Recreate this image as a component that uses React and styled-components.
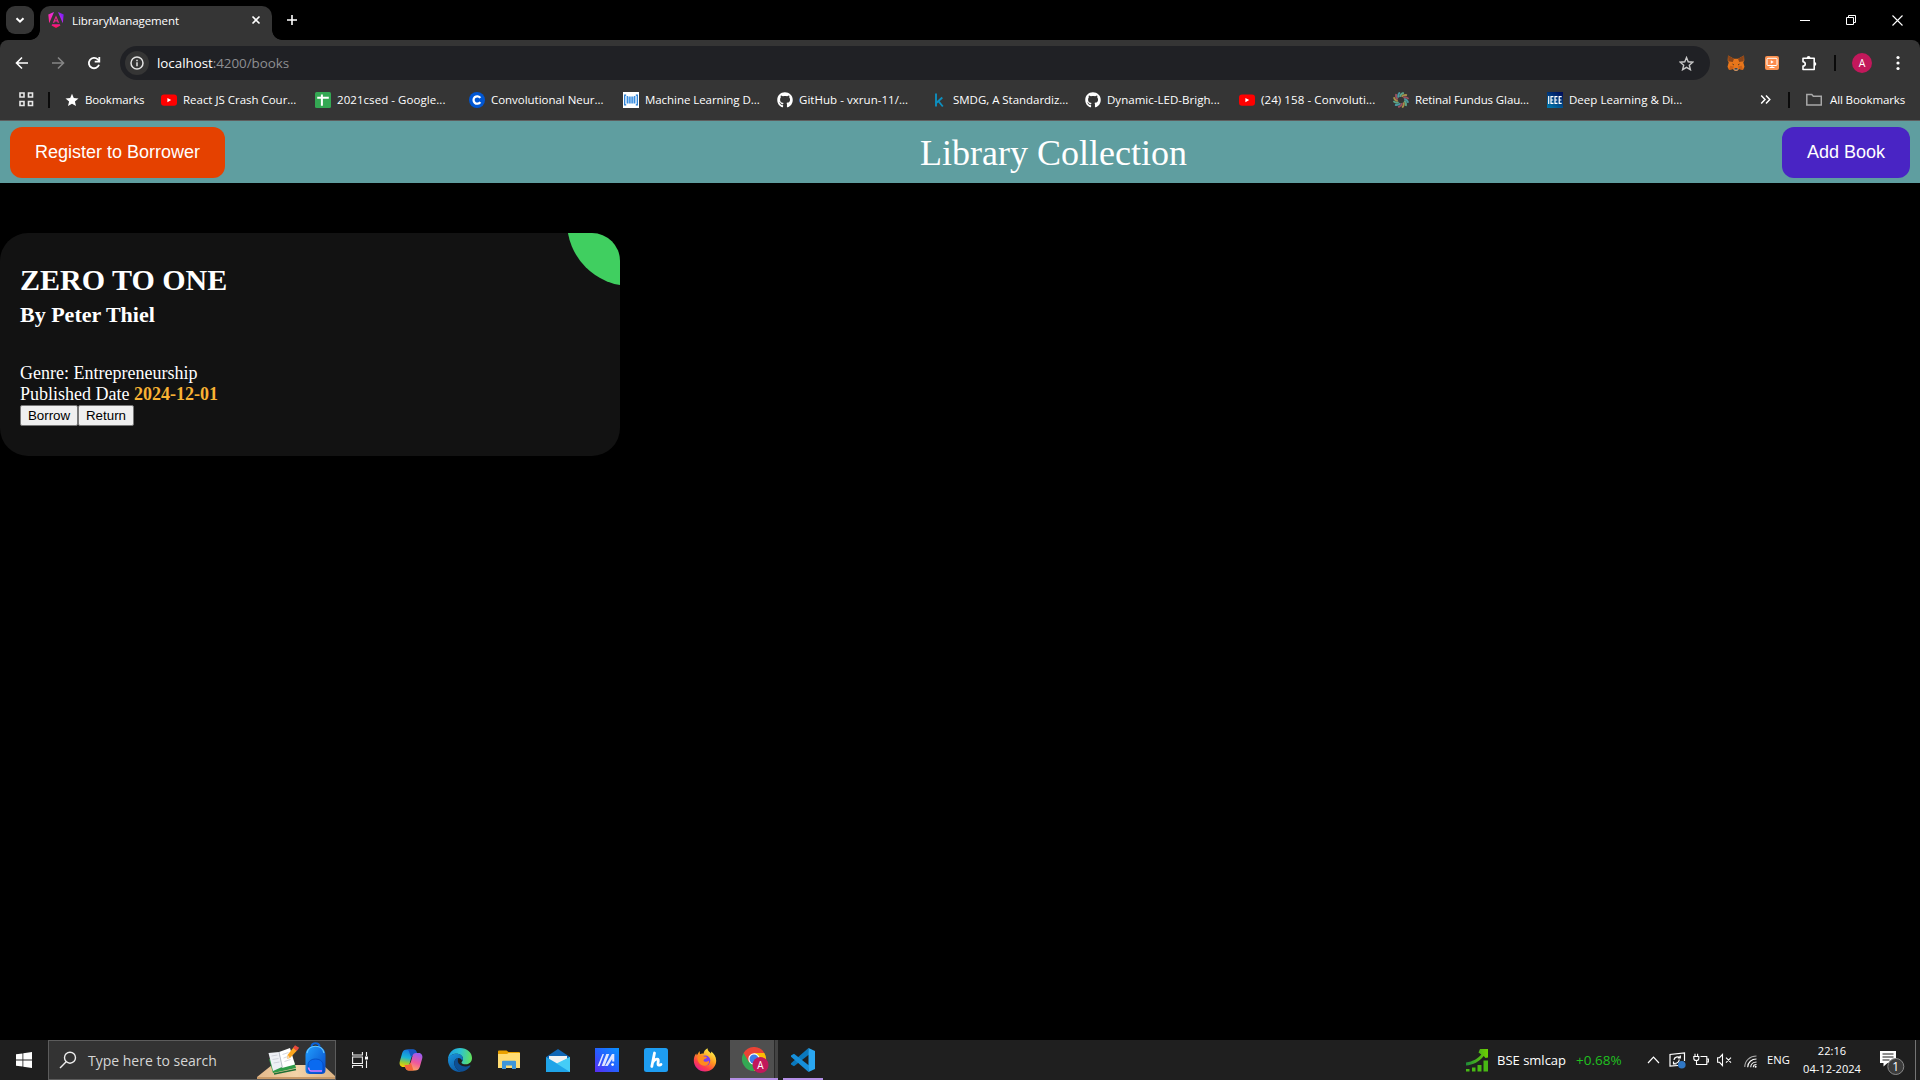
import React from "react";
import styled, { createGlobalStyle, css } from "styled-components";
import { FaGithub } from "react-icons/fa6";

const UI = '"Open Sans", "Noto Sans", sans-serif';

const GlobalStyle = createGlobalStyle`
  * { box-sizing: border-box; }
  html, body { margin: 0; padding: 0; background: #000; }
  body { overflow: hidden; }
  svg { display: block; flex: none; }
`;

const Screen = styled.div`
  width: 1920px;
  height: 1080px;
  display: flex;
  flex-direction: column;
  background: #000;
  color: #fff;
  font-family: ${UI};
`;

/* ---------- browser chrome ---------- */

const TabStrip = styled.div`
  height: 40px;
  flex: none;
  display: flex;
  align-items: flex-start;
  padding-left: 6px;
`;

const TabSearch = styled.div`
  width: 28px;
  height: 28px;
  margin-top: 6px;
  border-radius: 9px;
  background: #353535;
  display: flex;
  align-items: center;
  justify-content: center;
`;

const Tab = styled.div`
  position: relative;
  width: 232px;
  height: 34px;
  margin: 6px 0 0 6px;
  padding: 0 9px 6px 8px;
  border-radius: 10px 10px 0 0;
  background: #353535;
  display: flex;
  align-items: center;
  &::before, &::after {
    content: "";
    position: absolute;
    bottom: 0;
    width: 10px;
    height: 10px;
  }
  &::before {
    left: -10px;
    background: radial-gradient(circle at 0 0, transparent 9.5px, #353535 10.2px);
  }
  &::after {
    right: -10px;
    background: radial-gradient(circle at 100% 0, transparent 9.5px, #353535 10.2px);
  }
`;

const TabTitle = styled.span`
  flex: 1;
  margin-left: 8px;
  padding-top: 2px;
  font-size: 11.5px;
  line-height: 16px;
  letter-spacing: -0.1px;
  white-space: nowrap;
`;

const NewTab = styled.div`
  width: 40px;
  height: 40px;
  display: flex;
  align-items: center;
  justify-content: center;
`;

const WindowControls = styled.div`
  display: flex;
  margin-left: auto;
`;

const WindowButton = styled.div`
  width: 46px;
  height: 40px;
  display: flex;
  align-items: center;
  justify-content: center;
`;

const Toolbar = styled.div`
  height: 43px;
  flex: none;
  padding: 3px 0 0 4px;
  border-radius: 8px 8px 0 0;
  background: #353535;
  display: flex;
  align-items: center;
`;

const NavButton = styled.div`
  width: 36px;
  height: 34px;
  display: flex;
  align-items: center;
  justify-content: center;
`;

const Omnibox = styled.div`
  width: 1590px;
  height: 34px;
  margin-left: 8px;
  padding: 0 16px 0 5px;
  border-radius: 17px;
  background: #202125;
  display: flex;
  align-items: center;
`;

const SiteInfo = styled.div`
  width: 24px;
  height: 24px;
  border-radius: 50%;
  background: #353535;
  display: flex;
  align-items: center;
  justify-content: center;
`;

const Url = styled.span`
  flex: 1;
  margin-left: 8px;
  color: #8e8f92;
  font-size: 13.4px;
  line-height: 20px;
  letter-spacing: -0.04px;
  b { color: #fff; font-weight: 400; }
`;

const Extensions = styled.div`
  display: flex;
  align-items: center;
  padding-left: 8px;
  flex: 1;
`;

const Divider = styled.i`
  flex: none;
  width: 2px;
  height: 16px;
  background: #0a0a0a;
`;

const Avatar = styled.div`
  width: 20px;
  height: 20px;
  margin-left: 16px;
  border-radius: 50%;
  background: #c2185b;
  font-size: 10.5px;
  line-height: 20px;
  text-align: center;
`;

const BookmarkBar = styled.div`
  height: 38px;
  flex: none;
  padding: 0 15px 4px 19px;
  border-bottom: 1px solid #5e5e5e;
  background: #353535;
  display: flex;
  align-items: center;
`;

const Bookmark = styled.div`
  width: ${(p) => p.$width || 154}px;
  flex: none;
  display: flex;
  align-items: center;
  gap: 6px;
`;

const BookmarkText = styled.span`
  font-size: 11.5px;
  line-height: 16px;
  letter-spacing: ${(p) => p.$track || 0}px;
  white-space: nowrap;
`;

const BarEnd = styled.div`
  display: flex;
  align-items: center;
  margin-left: auto;
`;

/* ---------- page ---------- */

const Page = styled.main`
  flex: 1;
  font-family: "Liberation Serif", "Times New Roman", serif;
`;

const Header = styled.header`
  height: 62px;
  padding: 0 10px;
  background: #5f9ea0;
  display: flex;
  align-items: center;
`;

const Title = styled.div`
  flex: 1;
  padding: 3px 0 0 100px;
  font-size: 36px;
  line-height: 41px;
  text-align: center;
`;

const HeaderButton = styled.button`
  height: 51px;
  width: ${(p) => p.$width}px;
  padding: 1px 0 0;
  border: 0;
  border-radius: 12px;
  background: ${(p) => p.$color};
  color: #fff;
  font: 18px "Liberation Sans", Arial, sans-serif;
`;

const Card = styled.article`
  position: relative;
  overflow: hidden;
  width: 620px;
  height: 223px;
  margin-top: 50px;
  padding: 30px 20px;
  border-radius: 28px;
  background: #121212;
`;

const Corner = styled.div`
  position: absolute;
  top: -75px;
  right: -75px;
  width: 128px;
  height: 128px;
  border-radius: 50%;
  background: #40cf60;
`;

const BookTitle = styled.h1`
  margin: 0;
  font-size: 30px;
  line-height: 34px;
`;

const Author = styled.h2`
  margin: 5px 0 36px;
  font-size: 22px;
  line-height: 25px;
`;

const Detail = styled.div`
  font-size: 18px;
  line-height: 21px;
  b { color: #f9b234; }
`;

const Actions = styled.div`
  display: flex;
`;

const ActionButton = styled.button`
  height: 21px;
  width: ${(p) => p.$width}px;
  padding: 0;
  border: 1px solid #767676;
  border-radius: 2px;
  background: #efefef;
  color: #000;
  font: 13.333px/19px "Liberation Sans", Arial, sans-serif;
`;

/* ---------- taskbar ---------- */

const Taskbar = styled.footer`
  height: 40px;
  flex: none;
  background: #1f1f1f;
  display: flex;
  align-items: stretch;
`;

const StartButton = styled.div`
  width: 48px;
  display: flex;
  align-items: center;
  justify-content: center;
`;

const SearchBox = styled.div`
  width: 288px;
  border: 1px solid #5c5c5c;
  background: #333;
  display: flex;
  align-items: center;
  padding-left: 10px;
  overflow: hidden;
`;

const SearchText = styled.span`
  flex: 1;
  margin-left: 11px;
  padding-top: 1px;
  color: #d6d6d6;
  font-size: 14px;
  line-height: 20px;
  white-space: nowrap;
`;

const TaskButton = styled.div`
  width: ${(p) => p.$width || 49}px;
  height: 40px;
  display: flex;
  align-items: center;
  justify-content: center;
  ${(p) => p.$running && css`border-bottom: 2px solid #b48fe6; svg { margin-top: 2px; }`}
  ${(p) => p.$active && css`
    background: linear-gradient(90deg, #4f4f4f 0 44px, #292929 44px 45px, #434343 45px);
    padding-left: 4px;
  `}
`;

const Apps = styled.div`
  display: flex;
  margin-left: 2px;
`;

const Tray = styled.div`
  display: flex;
  align-items: center;
  margin-left: auto;
`;

const TrayText = styled.span`
  font-size: ${(p) => p.$size}px;
  margin-left: ${(p) => p.$gap}px;
  width: ${(p) => p.$width}px;
  color: ${(p) => p.$color || "#fff"};
  line-height: 18px;
  white-space: nowrap;
`;

const TrayIcon = styled.span`
  margin-left: ${(p) => p.$gap}px;
  padding-top: ${(p) => p.$drop || 0}px;
`;

const Clock = styled.div`
  width: 60px;
  margin-left: 12px;
  font-size: 11.1px;
  line-height: 18px;
  text-align: center;
  white-space: nowrap;
`;

const ShowDesktop = styled.div`
  width: 5px;
  height: 40px;
  margin-left: 10px;
  border-left: 1px solid #747474;
`;

/* ---------- icons ---------- */

const Line = ({ w, h = w, d, c = "#e3e3e3", sw = 1.6 }) => (
  <svg width={w} height={h} viewBox={`0 0 ${w} ${h}`} fill="none" stroke={c} strokeWidth={sw}>
    <path d={d} />
  </svg>
);

const AngularIcon = () => (
  <svg width="16" height="16" viewBox="0 0 16 16">
    <defs>
      <linearGradient id="ng" x1="0" y1="0.6" x2="1" y2="0.2">
        <stop offset="0" stopColor="#ff2a9a" />
        <stop offset="0.5" stopColor="#e52cf0" />
        <stop offset="1" stopColor="#6b1cf5" />
      </linearGradient>
      <linearGradient id="ngb" x1="0" y1="0" x2="0" y2="1">
        <stop offset="0" stopColor="#f0189c" />
        <stop offset="1" stopColor="#ff1744" />
      </linearGradient>
    </defs>
    <path d="M6 0 0.3 2.4 1.2 11.2ZM10 0l5.700 2.400-.9 8.800Z" fill="url(#ng)" />
    <path d="m8 3.600 3.200 7.200H9.700L9.200 9.500H6.800l-.5 1.300H4.800ZM8 6l-.8 2.200h1.600Z" fill="#e8278f" />
    <path d="M4.200 12.200h7.600l.6 1.400L8 16l-4.400-2.400Z" fill="url(#ngb)" />
  </svg>
);

const InfoIcon = () => (
  <svg width="14" height="14" viewBox="0 0 14 14" fill="none" stroke="#e3e3e3" strokeWidth="1.5">
    <circle cx="7" cy="7" r="6" />
    <path d="M7 6.300v4M7 3.700v1.500" />
  </svg>
);

const ReloadIcon = () => (
  <svg width="14" height="14" viewBox="0 0 14 14" fill="none" stroke="#fff" strokeWidth="1.800">
    <path d="M12 8.700A5.200 5.200 0 1 1 10.800 3.400L12.300 5" />
    <path d="M12.300 1v4.700H7.700" />
  </svg>
);

const FoxIcon = () => (
  <svg width="18" height="18" viewBox="0 0 18 18">
    <path d="M1 1.500 7 4.800h4l6-3.300.3 5-1 2 1.200 4.200-1.500 3.300-3.700-1-2 1.800H7.700l-2-1.800-3.700 1L.5 12.700l1.200-4.200-1-2Z" fill="#e8761b" />
    <path d="M1 1.500 7 4.800 5.800 8 1.300 7.200ZM17 1.500l-6 3.300L12.200 8l4.500-.8Z" fill="#8a4519" />
    <path d="M2 16l3.700-1L7 12.500 3.200 11.800ZM16 16l-3.700-1L11 12.500l3.800-.7Z" fill="#cd6116" />
    <path d="M4.800 9.500 7 10.200l-.3 1.300ZM13.200 9.500l-2.200.7.3 1.300Z" fill="#5a3c22" />
    <path d="M7 14.200h4v1.500l-.8.800H7.800l-.8-.8Z" fill="#c9b9aa" />
    <path d="M7.500 14.200h3l.2 1.200H7.300Z" fill="#24211f" />
  </svg>
);

const RecorderIcon = () => (
  <svg width="14" height="14" viewBox="0 0 14 14">
    <rect width="14" height="14" rx="2" fill="#fb9150" />
    <rect x="2" y="2.300" width="10" height="7.200" rx="1" fill="#fb8a4b" stroke="#fff" strokeWidth="1" />
    <path d="M5.800 4.200v3.600L8.800 6ZM6.500 9.500h1v1.500h2v.9h-5V11h2Z" fill="#fff" />
  </svg>
);

const PuzzleIcon = () => (
  <svg width="17" height="17" viewBox="0 0 17 17">
    <path d="M2 3.200h11.200v11.300H2v-3.400c3-.3 3-4.100 0-4.400Z" fill="none" stroke="#fff" strokeWidth="1.600" strokeLinejoin="round" />
    <path d="M5.700 3a1.900 1.900 0 0 1 3.800 0ZM13.400 7a1.900 1.900 0 0 1 0 3.800Z" fill="#fff" />
  </svg>
);

const AppsGrid = () => (
  <svg width="15" height="15" viewBox="0 0 15 15" fill="none" stroke="#e8e8e8" strokeWidth="1.600">
    <path d="M1 1h4v4H1ZM9.500 1h4v4h-4ZM1 9.500h4v4H1ZM9.500 9.500h4v4h-4Z" />
  </svg>
);

const StarFill = () => (
  <svg width="14" height="14" viewBox="0 0 14 14">
    <path d="m7 .8 1.800 4.300 4.700.4-3.600 3 1.100 4.600L7 10.700l-4 2.400 1.100-4.600-3.600-3 4.700-.4Z" fill="#fff" />
  </svg>
);

const YouTube = () => (
  <svg width="16" height="16" viewBox="0 0 16 16">
    <rect y="2.400" width="16" height="11.400" rx="3" fill="#f00" />
    <path d="M6.400 6v4.300L10.200 8.100Z" fill="#fff" />
  </svg>
);

const Sheets = () => (
  <svg width="16" height="16" viewBox="0 0 16 16">
    <rect width="16" height="16" rx="1.500" fill="#34a853" />
    <path d="M2.200 4.800h11.600v2H7.900V13.800h-2V6.800H2.200ZM5.900 2.500h2v3h-2Z" fill="#fff" />
  </svg>
);

const Coursera = () => (
  <svg width="16" height="16" viewBox="0 0 16 16">
    <circle cx="8" cy="8" r="8" fill="#0056d2" />
    <path d="M11.300 5.900A3.700 3.700 0 1 0 11.300 10.100" fill="none" stroke="#fff" strokeWidth="2.300" />
  </svg>
);

const Repo = () => (
  <svg width="16" height="16" viewBox="0 0 16 16">
    <rect width="16" height="16" fill="#fff" />
    <path d="M3.200 3.200H1.700v9.600h1.500M12.800 3.200h1.500v9.600h-1.500" fill="none" stroke="#1976d2" strokeWidth="1.200" />
    <path d="M4.300 4v7.500M6.200 4.500v7M8 4.500v7M9.800 4.500v7M11.700 4v7.500" stroke="#3b8ee0" strokeWidth="1.400" />
  </svg>
);

const KaggleMark = () => (
  <svg width="16" height="16" viewBox="0 0 16 16" fill="none" stroke="#0e8fbf" strokeWidth="1.900">
    <path d="M5 1.500v13M11.300 5.500 5.500 10.800M7.300 9 11.800 14.500" />
  </svg>
);

const Swirl = () => (
  <svg width="16" height="16" viewBox="0 0 16 16" fill="none" strokeWidth="1.900">
    {Array.from({ length: 12 }, (_, i) => (
      <path key={i} d="M7 4.800Q7.300 2 10.800.8" transform={`rotate(${i * 30} 8 8)`} stroke={["#5ba588", "#a6904a", "#98505f", "#4a98a2"][i % 4]} />
    ))}
  </svg>
);

const Ieee = () => (
  <svg width="16" height="16" viewBox="0 0 16 16">
    <defs>
      <linearGradient id="ie" x1="0.2" y1="1" x2="0.8" y2="0">
        <stop offset="0" stopColor="#0274a8" />
        <stop offset="1" stopColor="#00105c" />
      </linearGradient>
    </defs>
    <rect width="16" height="16" fill="url(#ie)" />
    <path d="M1.700 4v8M6.500 4.600H4v6.800h2.500M4 8h2.200M10.500 4.600H8v6.800h2.500M8 8h2.200M14.700 4.600h-2.500v6.800h2.500M12.200 8h2.200" fill="none" stroke="#fff" strokeWidth="1.200" />
  </svg>
);

const WindowsLogo = () => (
  <svg width="16" height="16" viewBox="0 0 16 16" fill="#fff">
    <path d="M0 2.300 6.500 1.400V7.600H0ZM7.300 1.300 16 0v7.600H7.300ZM0 8.400h6.500v6.200L0 13.700ZM7.300 8.400H16V16l-8.700-1.300Z" />
  </svg>
);

const SchoolArt = () => (
  <svg width="78" height="38" viewBox="0 0 78 38">
    <defs>
      <linearGradient id="bag" x1="0" y1="0" x2="1" y2="1">
        <stop offset="0" stopColor="#22a0ff" />
        <stop offset="1" stopColor="#0648c8" />
      </linearGradient>
      <linearGradient id="desk" x1="0" y1="0" x2="1" y2="0">
        <stop offset="0" stopColor="#e3b98c" />
        <stop offset="0.5" stopColor="#f3d3a8" />
        <stop offset="1" stopColor="#dcb384" />
      </linearGradient>
    </defs>
    <path d="M15 24h51l13 12H0Z" fill="url(#desk)" />
    <path d="M0 36h79v3H0Z" fill="#c99a68" />
    <path d="M12 18 16 32 39 27 37 20Z" fill="#2f9b48" />
    <path d="M17 33 39 28.500" stroke="#1c6d33" strokeWidth="1.500" />
    <path d="M11.500 12 22 11 25 26 16 30Z" fill="#eef0f5" />
    <path d="M22 11 33 7 38 23.500 25 27Z" fill="#fff" />
    <path d="M22 11 25.500 27" stroke="#bcc0ca" />
    <path d="m14.500 15 6-1M15.500 18.500l6-1M16.500 22l6-1M25.500 13.500l6-2M26.500 17l6-2M27.500 20.500l6-2" stroke="#c3c6d0" strokeWidth=".7" />
    <path d="M36.500 6.500 40 9.500 33 17l-3 .8.700-4Z" fill="#fca61f" />
    <path d="m36 7 2-2.800 4.200 2.600L39.800 10Z" fill="#e84a3c" />
    <path d="m30.800 14 2 2.600-3 1.300Z" fill="#f5dab6" />
    <path d="M54.500 6c0-5 8-5 8 0" fill="none" stroke="#0b63d8" strokeWidth="2.200" />
    <path d="M48.500 14c0-12 20-12 20 0v15c0 3-2 4-4 4h-12c-2 0-4-1-4-4Z" fill="url(#bag)" />
    <path d="M50 12c2-9 15-9 17 0" fill="none" stroke="#63c6ff" strokeWidth="1.200" />
    <path d="M51 24c0-8 15-8 15 0v6c0 1-1 2-2 2H53c-1 0-2-1-2-2Z" fill="#0a6af0" stroke="#0544b5" strokeWidth=".7" />
    <path d="M51.500 26.500q.5 3.500 3 3.500H65" fill="none" stroke="#d77bff" strokeWidth="1.500" />
  </svg>
);

const TaskView = () => (
  <svg width="16" height="16" viewBox="0 0 16 16" fill="none" stroke="#f2f2f2" strokeWidth="1.100">
    <path d="M.6 0v3h9.800V0M.6 5h9.800v6.500H.6ZM.6 16v-2.500h9.800V16M14.500 0v4M14.500 8.500V16" />
    <path d="M13 4.500h3v3h-3Z" fill="#fff" stroke="none" />
  </svg>
);

const Copilot = () => (
  <svg width="24" height="24" viewBox="0 0 24 24">
    <defs>
      <linearGradient id="cp1" x1="0.4" y1="0" x2="0.2" y2="1">
        <stop offset="0" stopColor="#1677dd" />
        <stop offset="0.45" stopColor="#19b5d8" />
        <stop offset="0.75" stopColor="#9bcb35" />
        <stop offset="1" stopColor="#ffd000" />
      </linearGradient>
      <linearGradient id="cp2" x1="0.7" y1="0" x2="0.3" y2="1">
        <stop offset="0" stopColor="#9b5cf0" />
        <stop offset="0.5" stopColor="#f0589c" />
        <stop offset="1" stopColor="#ffb657" />
      </linearGradient>
    </defs>
    <path d="M14 1.500c2.500 0 3.200 1.500 3.800 3.500l.7 2h-3c-2 0-2.800 1-3.500 3.500l-1.500 5.500c-.6 2-1.500 3-3.500 3H4.200C1.500 19 0 16.500.8 13.500L3.200 5C4 2.500 5.500 1.500 8 1.500Z" fill="url(#cp1)" />
    <path d="M14 1.500c2.500 0 3.200 1.500 3.800 3.500l.7 2h-3c-2 0-2.800.8-3.300 2.500L10.500 5c-.6-2-1-3.500-3-3.500Z" fill="#1756c4" />
    <path d="M10 22.500c-2.500 0-3.200-1.500-3.800-3.500l-.7-2h3c2 0 2.800-1 3.500-3.500L13.500 8c.6-2 1.500-3 3.500-3h2.800c2.700 0 4.200 2.500 3.400 5.500L20.800 19c-.8 2.500-2.300 3.500-4.800 3.500Z" fill="url(#cp2)" />
    <path d="M10 22.500c-2.500 0-3.200-1.500-3.800-3.500l-.7-2h3c2 0 2.800-.8 3.300-2.500l1.700 5c.6 1.500.5 3 2 3Z" fill="#f4643c" />
  </svg>
);

const Edge = () => (
  <svg width="24" height="24" viewBox="0 0 24 24">
    <defs>
      <linearGradient id="e1" x1="0" y1="0.4" x2="1" y2="0.5">
        <stop offset="0" stopColor="#1b9de2" />
        <stop offset="0.5" stopColor="#2dc3d0" />
        <stop offset="1" stopColor="#62e25c" />
      </linearGradient>
      <linearGradient id="e2" x1="0" y1="0" x2="0.6" y2="1">
        <stop offset="0" stopColor="#1a96df" />
        <stop offset="1" stopColor="#0c59a4" />
      </linearGradient>
    </defs>
    <path d="M0 12C0 4.500 5.500 0 12 0c7 0 12 4.500 12 10 0 4-3 6.300-6.300 6.300-2.700 0-4.200-.9-4.200-1.800 0-.6 1.500-1.300 1.500-3.500C15 8 12 5.800 8.500 5.800 4 5.800 1 8.500 0 12Z" fill="url(#e1)" />
    <path d="M0 12c.5-3.800 4-6.200 8.500-6.200 3.500 0 6.500 2 6.500 5 0 .9-.4 1.800-.8 2.300-.5-2-2-3-3.700-3C8 10.100 6.300 12.500 6.300 15c0 4.500 4 8.600 8.500 8.600-1 .3-1.800.4-2.800.4C5 24 0 18.500 0 12Z" fill="url(#e2)" />
    <path d="M10.300 10.100C8 10.100 6.300 12.500 6.300 15c0 4.500 4 8.600 8.500 8.600 3-.8 5.800-2.700 7.500-5.300.4-.6-.2-1-.8-.7-1.200.6-2.800.9-4 .9-4.200 0-7.700-2.500-7.700-5.700 0-1 .3-2 .5-2.700Z" fill="#0d4f94" />
  </svg>
);

const Explorer = () => (
  <svg width="22" height="20" viewBox="0 0 22 20">
    <path d="M0 1.500q0-1 1-1h7.500L10.500 2H21q1 0 1 1v13H0Z" fill="#e9a100" />
    <path d="M0 4h9l1.500-1H22v15H0Z" fill="#ffdc73" />
    <path d="M4 19v-7.200q0-1 1-1h12q1 0 1 1V19h-4v-3.500H8V19Z" fill="#3f96d8" />
  </svg>
);

const Mail = () => (
  <svg width="24" height="23" viewBox="0 0 24 23">
    <path d="M0 8 12 0l12 8v3H0Z" fill="#1066b5" />
    <path d="M3 7h18v8H3Z" fill="#f2f2f2" />
    <path d="M0 8l12 7L24 8v15H0Z" fill="#1fa4e8" />
    <path d="M24 8v15L10.500 14.500Z" fill="#45cdf7" />
  </svg>
);

const MyAsus = () => (
  <svg width="24" height="24" viewBox="0 0 24 24">
    <defs>
      <linearGradient id="ma" x1="0" y1="1" x2="1" y2="0">
        <stop offset="0" stopColor="#5a2bf0" />
        <stop offset="0.5" stopColor="#2461ff" />
        <stop offset="1" stopColor="#0a93ff" />
      </linearGradient>
    </defs>
    <rect width="24" height="24" fill="url(#ma)" />
    <path d="M7.500 6H9L4.500 18H2.700ZM11.300 6h2.900L9.500 18H6.600ZM17 6h2.300v7.500h-2.100V11l-4.500 7H10Z" fill="#dfe5ff" />
    <circle cx="17.600" cy="16.600" r="1.400" fill="#fff" />
  </svg>
);

const Hicon = () => (
  <svg width="24" height="24" viewBox="0 0 24 24">
    <rect width="24" height="24" rx="2.500" fill="#1e9df1" />
    <path d="M10.500 5 7.800 18.500M8.600 14.500c1.500-3 6.200-5.200 5.700-1.500-.4 3-1.300 5.500 2.700 3.500" fill="none" stroke="#fff" strokeWidth="2.800" strokeLinecap="round" />
  </svg>
);

const Firefox = () => (
  <svg width="24" height="24" viewBox="0 0 24 24">
    <defs>
      <linearGradient id="ff" x1="0.8" y1="0.1" x2="0.25" y2="0.95">
        <stop offset="0" stopColor="#fff04a" />
        <stop offset="0.4" stopColor="#ff9a1f" />
        <stop offset="0.75" stopColor="#ff3f48" />
        <stop offset="1" stopColor="#e5208d" />
      </linearGradient>
    </defs>
    <path d="M12 23.500C5.700 23.500.8 18.700.8 12.500c0-3 1-5.500 2.500-7l.5 2L6.500 3l.5 3.200c1-.6 2.500-.7 3.500-.5C11 3 12.500 1.300 14.500.3c0 2.500 2 3.500 3.500 5.200l.3-2c2.500 2 4.900 5 4.900 9.300 0 6.200-5 10.700-11.200 10.700Z" fill="url(#ff)" />
    <circle cx="12.300" cy="12.600" r="5" fill="#7b3ff0" />
    <path d="M4.500 9c2-2.500 5.500-2 6.500-.5 1.500 0 2.500.3 3 .7-.5 1.500-3 1.500-3.500 3 .5 2 3.500 2 5.500.5.5 3-2 5-4.700 5C7.500 17.700 4 14 4.500 9Z" fill="#ff8a1e" />
  </svg>
);

const Chrome = () => (
  <svg width="28" height="26" viewBox="0 0 28 26">
    <path d="M12 12V6h10.400A12 12 0 0 1 12 24Z" fill="#fbbc05" />
    <path d="M12 12 17.200 15 12 24A12 12 0 0 1 1.600 6Z" fill="#34a853" />
    <path d="M1.600 6A12 12 0 0 1 22.400 6H12Z" fill="#ea4335" />
    <path d="M1.600 6 6.800 15 12 6Z" fill="#ea4335" />
    <circle cx="12" cy="12" r="5.700" fill="#fff" />
    <circle cx="12" cy="12" r="4.500" fill="#3d7de8" />
    <circle cx="18.500" cy="18" r="8" fill="#c2185b" />
    <text x="18.500" y="21.700" textAnchor="middle" fill="#fff" fontSize="10" fontFamily="Open Sans, sans-serif">A</text>
  </svg>
);

const VsCode = () => (
  <svg width="24" height="24" viewBox="0 0 24 24">
    <path d="M17.500 0 18 6.500 3 18.300 0 16.500v-1.200Z" fill="#0a78bd" />
    <path d="M17.500 24 18 17.500 3 5.700 0 7.500v1.200Z" fill="#168fda" />
    <path d="M17.500 0 24 3v18l-6.500 3Z" fill="#2aa7f2" />
  </svg>
);

const StockIcon = () => (
  <svg width="22" height="23" viewBox="0 0 22 23">
    <defs>
      <linearGradient id="stk" x1="0" y1="0" x2="1" y2="0">
        <stop offset="0" stopColor="#1f8a3a" />
        <stop offset="1" stopColor="#6ed000" />
      </linearGradient>
    </defs>
    <path d="M0 13.500C7 12.500 12 9.500 15.300 5.500L12.500 3.500 14 0h8v8.500l-2.500.5-1.800-2C13.500 12.500 7 16 0 16.500Z" fill="url(#stk)" />
    <path d="M0 20h3.500v2.500H0ZM6 18.500h3.500v4H6ZM11.500 16h4v6.500h-4ZM17.500 11.500H22v11h-4.500Z" fill="#48b814" />
  </svg>
);

const LocationSync = () => (
  <svg width="17" height="17" viewBox="0 0 17 17" fill="none" stroke="#fff" strokeWidth="1.200">
    <path d="M9 13.500 1 14V2.500L15.500 1v8" />
    <path d="M4.500 9.500V12h3M4.800 11.500C9 11.500 10.500 9 10 7.500M5 8c0-3 4-4 6-2.500M8.800 5.800h2.500V3.500" />
    <circle cx="12.800" cy="12.800" r="3.800" fill="#2f77c5" stroke="none" />
  </svg>
);

const Battery = () => (
  <svg width="16" height="14" viewBox="0 0 16 14" fill="none" stroke="#fff" strokeWidth="1.100">
    <path d="M7.500 3.500h6.300v8H3.500V8M13.800 6h1.600v3h-1.600M.8 3.500h5v2q0 2-2.500 2T.8 5.500ZM2 3.500V.8M4.600 3.500V.8" />
  </svg>
);

const Muted = () => (
  <svg width="15" height="14" viewBox="0 0 15 14" fill="none" stroke="#fff" strokeWidth="1.100">
    <path d="M.6 4.700h1.900l3-3.200v11l-3-3.200H.6ZM9 4.700l5 5M14 4.700l-5 5" />
  </svg>
);

const Wifi = () => (
  <svg width="13" height="13" viewBox="0 0 13 13" fill="none" stroke="#fff" strokeWidth="1.100">
    <path d="M.8 12C.8 5.500 6 1 12.500 1" stroke="#a9a9a9" />
    <path d="M3.700 12.300c0-5 4-8.300 8.800-8.300M6.700 12.300c0-3.300 2.600-5.300 5.800-5.300M9.300 12.300c0-1.800 1.400-2.800 3.200-2.800" />
    <circle cx="11.600" cy="11.800" r="1" fill="#fff" stroke="none" />
  </svg>
);

const Notifications = () => (
  <svg width="25" height="26" viewBox="0 0 25 26">
    <path d="M0 1h16v12H7.500L3.500 16.500V13H0Z" fill="#fff" />
    <path d="M2.500 4h11M2.500 7h11M2.500 10h7" stroke="#1f1f1f" strokeWidth="1.100" />
    <circle cx="15.800" cy="16.500" r="8" fill="#3b3b3b" stroke="#8a8a8a" />
    <text x="15.800" y="20.600" textAnchor="middle" fill="#fff" fontSize="12" fontFamily="Open Sans, sans-serif">1</text>
  </svg>
);

const bookmarks = [
  { icon: <YouTube />, text: "React JS Crash Cour...", track: -0.02 },
  { icon: <Sheets />, text: "2021csed - Google...", track: 0.06 },
  { icon: <Coursera />, text: "Convolutional Neur...", track: -0.03 },
  { icon: <Repo />, text: "Machine Learning D...", track: -0.06 },
  { icon: <FaGithub size={16} />, text: "GitHub - vxrun-11/...", track: 0.04 },
  { icon: <KaggleMark />, text: "SMDG, A Standardiz...", track: -0.03 },
  { icon: <FaGithub size={16} />, text: "Dynamic-LED-Brigh...", track: 0.03 },
  { icon: <YouTube />, text: "(24) 158 - Convoluti...", track: 0.09 },
  { icon: <Swirl />, text: "Retinal Fundus Glau...", track: -0.11 },
  { icon: <Ieee />, text: "Deep Learning & Di...", track: 0.03 },
];

const GapLeft = styled.span`
  margin-left: ${(p) => p.$gap}px;
  display: flex;
`;

function Browser() {
  return (
    <>
      <TabStrip>
        <TabSearch><Line w={10} d="M1.500 3.200 5 6.700 8.500 3.200" c="#fff" sw={2} /></TabSearch>
        <Tab>
          <AngularIcon />
          <TabTitle>LibraryManagement</TabTitle>
          <Line w={14} d="M3.500 3.500l7 7M10.500 3.500l-7 7" c="#fff" sw={1.600} />
        </Tab>
        <NewTab><Line w={12} d="M6 1v10M1 6h10" c="#fff" sw={1.600} /></NewTab>
        <WindowControls>
          <WindowButton><Line w={10} d="M0 5.500h10" c="#fff" sw={1} /></WindowButton>
          <WindowButton><Line w={10} d="M.5 2.500h7v7h-7ZM2.500 2.500v-2h7v7h-2" c="#fff" sw={1} /></WindowButton>
          <WindowButton><Line w={11} d="M.5.5l10 10M10.500.5l-10 10" c="#fff" sw={1.100} /></WindowButton>
        </WindowControls>
      </TabStrip>
      <Toolbar>
        <NavButton><Line w={14} d="M13 7H2M7 1.500 1.500 7 7 12.500" c="#fff" sw={1.600} /></NavButton>
        <NavButton><Line w={14} d="M1 7h11M7 1.500 12.500 7 7 12.500" c="#858585" sw={1.600} /></NavButton>
        <NavButton><ReloadIcon /></NavButton>
        <Omnibox>
          <SiteInfo><InfoIcon /></SiteInfo>
          <Url><b>localhost</b>:4200/books</Url>
          <Line w={15} d="m7.500 1.600 1.700 4.200 4.600.4-3.500 3 1.100 4.500-3.900-2.400-3.900 2.400 1.100-4.500-3.500-3 4.600-.4Z" c="#c9c9c9" sw={1.400} />
        </Omnibox>
        <Extensions>
          <GapLeft $gap={9}><FoxIcon /></GapLeft>
          <GapLeft $gap={20}><RecorderIcon /></GapLeft>
          <GapLeft $gap={22}><PuzzleIcon /></GapLeft>
          <GapLeft $gap={16}><Divider /></GapLeft>
          <Avatar>A</Avatar>
          <GapLeft $gap={24}>
            <svg width="4" height="16" viewBox="0 0 4 16" fill="#fff"><circle cx="2" cy="2.500" r="1.600" /><circle cx="2" cy="8" r="1.600" /><circle cx="2" cy="13.500" r="1.600" /></svg>
          </GapLeft>
        </Extensions>
      </Toolbar>
      <BookmarkBar>
        <AppsGrid />
        <GapLeft $gap={14}><Divider /></GapLeft>
        <GapLeft $gap={15}>
          <Bookmark $width={96}><StarFill /><BookmarkText $track={-0.13}>Bookmarks</BookmarkText></Bookmark>
        </GapLeft>
        {bookmarks.map((b) => (
          <Bookmark key={b.text}>{b.icon}<BookmarkText $track={b.track}>{b.text}</BookmarkText></Bookmark>
        ))}
        <BarEnd>
          <Line w={11} d="M1.200 1.500 5 5.500 1.200 9.500M6 1.500 9.800 5.500 6 9.500" c="#fff" sw={1.500} />
          <GapLeft $gap={17}><Divider /></GapLeft>
          <GapLeft $gap={16}><Line w={16} h={13} d="M.8 1.500h5l1.500 1.700h8V12H.8Z" c="#a8a8a8" sw={1.500} /></GapLeft>
          <GapLeft $gap={8}><BookmarkText $track={-0.13}>All Bookmarks</BookmarkText></GapLeft>
        </BarEnd>
      </BookmarkBar>
    </>
  );
}

function Library() {
  return (
    <Page>
      <Header>
        <HeaderButton $width={215} $color="#e54100">Register to Borrower</HeaderButton>
        <Title>Library Collection</Title>
        <HeaderButton $width={128} $color="#4924c4">Add Book</HeaderButton>
      </Header>
      <Card>
        <Corner />
        <BookTitle>ZERO TO ONE</BookTitle>
        <Author>By Peter Thiel</Author>
        <Detail>Genre: Entrepreneurship</Detail>
        <Detail>Published Date <b>2024-12-01</b></Detail>
        <Actions>
          <ActionButton $width={58}>Borrow</ActionButton>
          <ActionButton $width={56}>Return</ActionButton>
        </Actions>
      </Card>
    </Page>
  );
}

function WindowsTaskbar() {
  return (
    <Taskbar>
      <StartButton><WindowsLogo /></StartButton>
      <SearchBox>
        <svg width="18" height="18" viewBox="0 0 18 18" fill="none" stroke="#eee" strokeWidth="1.400">
          <circle cx="11" cy="6.700" r="5.500" /><path d="M7.200 10.800 1 17" />
        </svg>
        <SearchText>Type here to search</SearchText>
        <SchoolArt />
      </SearchBox>
      <TaskButton $width={48}><TaskView /></TaskButton>
      <Apps>
        <TaskButton><Copilot /></TaskButton>
        <TaskButton><Edge /></TaskButton>
        <TaskButton><Explorer /></TaskButton>
        <TaskButton><Mail /></TaskButton>
        <TaskButton><MyAsus /></TaskButton>
        <TaskButton><Hicon /></TaskButton>
        <TaskButton><Firefox /></TaskButton>
      </Apps>
      <GapLeft $gap={1}><TaskButton $width={48} $running $active><Chrome /></TaskButton></GapLeft>
      <GapLeft $gap={5}><TaskButton $width={40} $running><VsCode /></TaskButton></GapLeft>
      <Tray>
        <StockIcon />
        <TrayText $size={13} $gap={9} $width={69}>BSE smlcap</TrayText>
        <TrayText $size={13.500} $gap={10} $width={46} $color="#1fc11f">+0.68%</TrayText>
        <TrayIcon $gap={25}><Line w={13} h={8} d="M1 7 6.500 1.200 12 7" c="#fff" sw={1.200} /></TrayIcon>
        <TrayIcon $gap={9}><LocationSync /></TrayIcon>
        <TrayIcon $gap={7}><Battery /></TrayIcon>
        <TrayIcon $gap={8}><Muted /></TrayIcon>
        <TrayIcon $gap={12} $drop={2}><Wifi /></TrayIcon>
        <TrayText $size={11.200} $gap={10} $width={23}>ENG</TrayText>
        <Clock>22:16<br />04-12-2024</Clock>
        <TrayIcon $gap={18} $drop={6}><Notifications /></TrayIcon>
        <ShowDesktop />
      </Tray>
    </Taskbar>
  );
}

export default function App() {
  return (
    <Screen>
      <GlobalStyle />
      <Browser />
      <Library />
      <WindowsTaskbar />
    </Screen>
  );
}
